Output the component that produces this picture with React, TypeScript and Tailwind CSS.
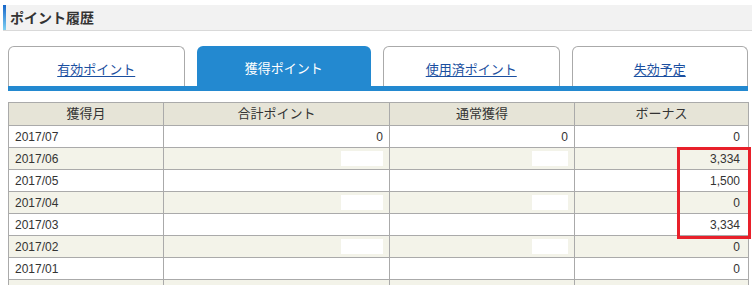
import React from "react";

const tabs = [
  { label: "有効ポイント", active: false },
  { label: "獲得ポイント", active: true },
  { label: "使用済ポイント", active: false },
  { label: "失効予定", active: false },
];

type Row = {
  month: string;
  total: string | null;
  normal: string | null;
  bonus: string;
};

// null = masked cell (white block)
const rows: Row[] = [
  { month: "2017/07", total: "0", normal: "0", bonus: "0" },
  { month: "2017/06", total: null, normal: null, bonus: "3,334" },
  { month: "2017/05", total: "", normal: "", bonus: "1,500" },
  { month: "2017/04", total: null, normal: null, bonus: "0" },
  { month: "2017/03", total: "", normal: "", bonus: "3,334" },
  { month: "2017/02", total: null, normal: null, bonus: "0" },
  { month: "2017/01", total: "", normal: "", bonus: "0" },
  { month: "", total: "", normal: "", bonus: "" },
];

function Mask({ w }: { w: string }) {
  return <span className={`ml-auto block h-[15px] bg-white ${w}`} />;
}

export default function App() {
  return (
    <div
      className="relative h-[285px] w-[752px] overflow-hidden bg-white text-[#333]"
      style={{ fontFamily: '"Liberation Sans", "Noto Sans CJK JP", sans-serif' }}
    >
      {/* Section title */}
      <div className="ml-[3px] mt-[5px] flex h-[26px] border-b border-[#d9d9d9] bg-[#f2f2f2]">
        <div className="w-[3px] bg-gradient-to-b from-[#1565c8] to-[#7fd0f2]" />
        <h2 className="flex items-center pl-[4px] text-[14px] font-bold leading-none text-[#333]">
          ポイント履歴
        </h2>
      </div>

      {/* Tabs */}
      <div className="mx-[8px] mt-[15px] w-[740px]">
        <div className="flex gap-[12px]">
          {tabs.map((t) => (
            <div
              key={t.label}
              className={
                t.active
                  ? "flex h-[40px] flex-1 items-center justify-center rounded-t-[6px] bg-[#2389d0] pt-[6px] text-[13px] text-white"
                  : "flex h-[40px] flex-1 items-center justify-center rounded-t-[6px] border border-b-0 border-[#aaaaaa] bg-white pt-[6px] text-[13px]"
              }
            >
              {t.active ? (
                <span>{t.label}</span>
              ) : (
                <a href="#" className="text-[#1a4fa0] underline underline-offset-2">
                  {t.label}
                </a>
              )}
            </div>
          ))}
        </div>
        <div className="h-[5px] bg-[#2389d0]" />
      </div>

      {/* Table */}
      <table className="ml-[8px] mt-[11px] w-[740px] table-fixed border-collapse text-[12px]">
        <colgroup>
          <col className="w-[155px]" />
          <col className="w-[226px]" />
          <col className="w-[185px]" />
          <col className="w-[174px]" />
        </colgroup>
        <thead>
          <tr className="h-[23px] bg-[#e6e4d7] text-[13px] font-normal">
            <th className="border border-[#aaaaaa] p-0 font-normal">獲得月</th>
            <th className="border border-[#aaaaaa] p-0 font-normal">合計ポイント</th>
            <th className="border border-[#aaaaaa] p-0 font-normal">通常獲得</th>
            <th className="border border-[#aaaaaa] p-0 font-normal">ボーナス</th>
          </tr>
        </thead>
        <tbody>
          {rows.map((r, i) => (
            <tr key={i} className={i % 2 === 1 ? "h-[22px] bg-[#f3f3e9]" : "h-[22px] bg-white"}>
              <td className="border border-[#aaaaaa] px-[6px] py-0">{r.month}</td>
              <td className="border border-[#aaaaaa] px-[6px] py-0 text-right">
                {r.total === null ? <Mask w="w-[42px]" /> : r.total}
              </td>
              <td className="border border-[#aaaaaa] px-[6px] py-0 text-right">
                {r.normal === null ? <Mask w="w-[36px]" /> : r.normal}
              </td>
              <td className="border border-[#aaaaaa] py-0 pl-[6px] pr-[8px] text-right">{r.bonus}</td>
            </tr>
          ))}
        </tbody>
      </table>

      {/* Highlight box */}
      <div className="absolute left-[677px] top-[147px] h-[92px] w-[74px] border-[3px] border-[#e8202a]" />
    </div>
  );
}
